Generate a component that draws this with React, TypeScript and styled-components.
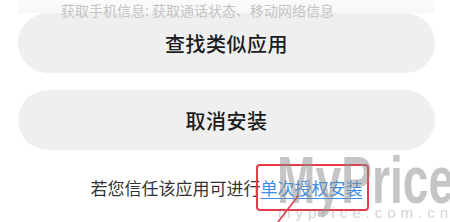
import React from 'react';
import styled, {createGlobalStyle} from 'styled-components';

const GlobalStyle = createGlobalStyle`
  html, body {
    margin: 0;
    padding: 0;
    background: #fff;
  }
  body {
    font-family: "Noto Sans CJK SC", "Noto Sans", sans-serif;
  }
`

const Screen = styled.div`
  position: relative;
  width: 450px;
  height: 222px;
  overflow: hidden;
  background: #fff;
  display: flex;
  flex-direction: column;
  padding: 0 15px 0 18px;
  box-sizing: border-box;
`

const InfoStrip = styled.div`
  position: relative;
  z-index: 1;
  height: 13px;
  background: linear-gradient(#fbfbfb, #f7f7f7);
  overflow: visible;

  p {
    margin: 0;
    padding: 3px 0 0 43px;
    font-size: 14px;
    line-height: 15px;
    color: #c4c4c4;
    white-space: nowrap;
  }
`

const Actions = styled.div`
  display: flex;
  flex-direction: column;
  gap: 17px;
`

const PillButton = styled.button`
  height: 60px;
  border: none;
  border-radius: 30px;
  background: #efefef;
  color: #1c1c1c;
  font-family: "Noto Sans CJK SC", sans-serif;
  font-size: 20px;
  font-weight: 500;
  letter-spacing: 0.5px;
  display: flex;
  align-items: center;
  justify-content: center;
  padding: 0;
`

const TrustLine = styled.p`
  margin: 26px 0 0;
  text-align: center;
  font-size: 17px;
  line-height: 24px;
  color: #333;
  white-space: nowrap;
`

const GrantLink = styled.a`
  position: relative;
  color: #3a8ee6;
  text-decoration: underline;
  text-underline-offset: 3px;
  text-decoration-thickness: 1px;

  &::after {
    content: '';
    position: absolute;
    left: -5px;
    right: -6px;
    top: -11px;
    bottom: -11px;
    border: 2px solid #e63a48;
    border-radius: 4px;
  }
`

const Pointer = styled.svg`
  position: absolute;
  left: 270px;
  top: 190px;
`

const WatermarkBig = styled.div`
  position: absolute;
  left: 277px;
  top: 147px;
  font-family: "Liberation Sans", Arial, sans-serif;
  font-weight: 700;
  font-size: 66px;
  line-height: 66px;
  color: rgba(140, 140, 140, 0.5);
  transform: scaleX(0.7);
  transform-origin: left top;
  white-space: nowrap;
  pointer-events: none;
`

const WatermarkSmall = styled.div`
  position: absolute;
  left: 278px;
  top: 205px;
  font-family: "Liberation Sans", Arial, sans-serif;
  font-size: 15px;
  line-height: 15px;
  letter-spacing: 5px;
  color: rgba(140, 140, 140, 0.4);
  white-space: nowrap;
  pointer-events: none;
`

export default function App() {
    return (
        <>
            <GlobalStyle/>
            <Screen>
                <InfoStrip>
                    <p>获取手机信息: 获取通话状态、移动网络信息</p>
                </InfoStrip>
                <Actions>
                    <PillButton>查找类似应用</PillButton>
                    <PillButton>取消安装</PillButton>
                </Actions>
                <TrustLine>
                    若您信任该应用可进行<GrantLink>单次授权安装</GrantLink>
                </TrustLine>
                <Pointer width="40" height="32" viewBox="0 0 40 32">
                    <line x1="28" y1="6" x2="8" y2="32" stroke="#e63a48" strokeWidth="1.6" strokeLinecap="round"/>
                </Pointer>
                <WatermarkBig>MyPrice</WatermarkBig>
                <WatermarkSmall>myprice.com.cn</WatermarkSmall>
            </Screen>
        </>
    );
}
